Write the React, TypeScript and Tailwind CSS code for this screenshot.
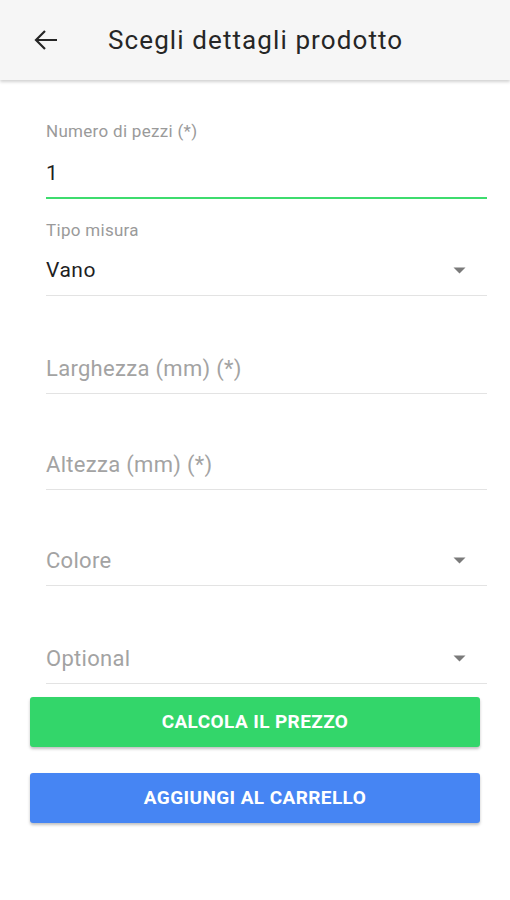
import type { ReactNode } from 'react'

/**
 * Schermata "Scegli dettagli prodotto"
 * Form con campi di misura e due pulsanti azione
 */

function Caret() {
  return (
    <svg width="13" height="7" viewBox="0 0 13 7" className="mr-[21px] shrink-0">
      <path d="M0.5 0.5H12.5L6.5 6.5Z" fill="#7a7a7a" />
    </svg>
  )
}

type FieldProps = {
  label?: string
  value?: string
  placeholder?: string
  select?: boolean
  active?: boolean
  className?: string
}

function Field({ label, value, placeholder, select, active, className }: FieldProps) {
  return (
    <div className={className}>
      {label && (
        <div
          className={
            active
              ? 'text-[17px] leading-[18px] text-[#9a9a9a] mb-[13px] tracking-[0.3px]'
              : 'text-[17px] leading-[18px] text-[#9a9a9a] mb-[11px] tracking-[0.3px]'
          }
        >
          {label}
        </div>
      )}
      <div
        className={
          active
            ? 'h-[46px] flex items-center justify-between pb-[2px] border-b-2 border-[#3ddc6e]'
            : 'h-[46px] flex items-center justify-between pb-[4px] border-b border-[#e3e3e3]'
        }
      >
        {value ? (
          <span className="text-[21px] text-[#1f1f1f] tracking-[0.5px]">{value}</span>
        ) : (
          <span className="text-[22px] text-[#a3a3a3] tracking-[0.3px]">{placeholder}</span>
        )}
        {select && <Caret />}
      </div>
    </div>
  )
}

function ActionButton({ children, color }: { children: ReactNode; color: string }) {
  return (
    <button
      className={`${color} w-full h-[50px] rounded-[3px] text-white font-bold text-[19px] tracking-[0.4px] shadow-[0_2px_3px_rgba(0,0,0,0.25)]`}
    >
      {children}
    </button>
  )
}

export default function App() {
  return (
    <div
      className="w-[510px] h-[900px] bg-white flex flex-col"
      style={{ fontFamily: 'Roboto, "Noto Sans", sans-serif' }}
    >
      {/* Header */}
      <div className="h-[80px] bg-[#f6f6f6] flex items-center shadow-[0_2px_3px_rgba(0,0,0,0.18)] relative z-10">
        <svg width="24" height="22" viewBox="0 0 24 22" className="ml-[34px]">
          <path
            d="M23 11H2M11 2L2 11L11 20"
            stroke="#262626"
            strokeWidth="2.2"
            fill="none"
            strokeLinejoin="miter"
          />
        </svg>
        <h1 className="ml-[50px] text-[26px] font-normal text-[#262626] tracking-[1.1px]">
          Scegli dettagli prodotto
        </h1>
      </div>

      {/* Form */}
      <div className="pl-[46px] pr-[23px] pt-[42px] flex flex-col">
        <Field label="Numero di pezzi (*)" value="1" active />
        <Field label="Tipo misura" value="Vano" select className="mt-[22px]" />
        <Field placeholder="Larghezza (mm) (*)" className="mt-[52px]" />
        <Field placeholder="Altezza (mm) (*)" className="mt-[50px]" />
        <Field placeholder="Colore" select className="mt-[50px]" />
        <Field placeholder="Optional" select className="mt-[52px]" />
      </div>

      {/* Pulsanti */}
      <div className="px-[30px] pt-[13px] flex flex-col gap-[26px]">
        <ActionButton color="bg-[#33d66a]">CALCOLA IL PREZZO</ActionButton>
        <ActionButton color="bg-[#4685f3]">AGGIUNGI AL CARRELLO</ActionButton>
      </div>
    </div>
  )
}
